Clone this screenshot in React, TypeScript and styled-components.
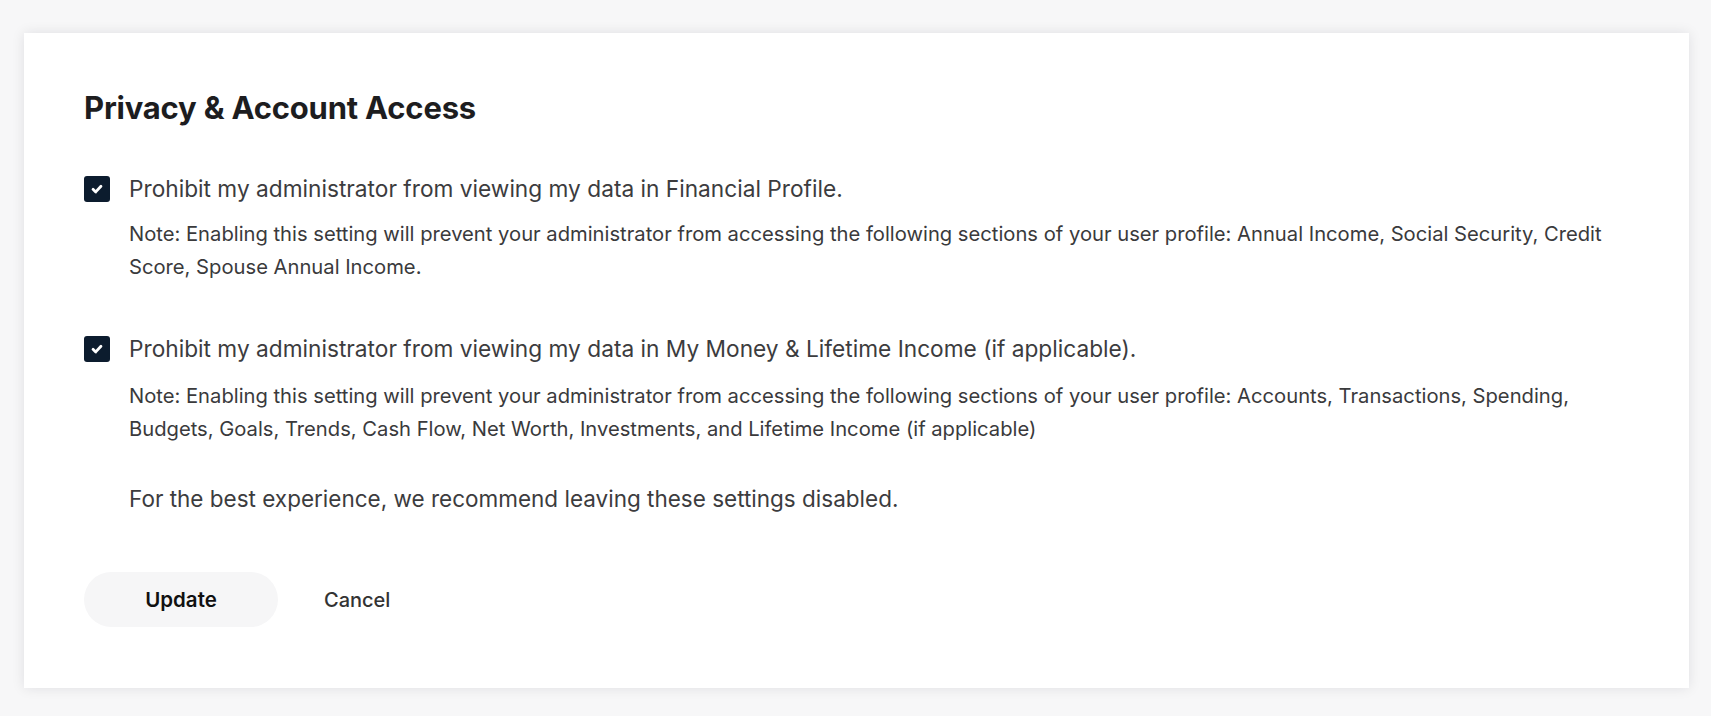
import React from "react";
import styled, { createGlobalStyle } from "styled-components";

const Global = createGlobalStyle`
  html, body { margin: 0; padding: 0; background: #f7f7f8; }
  body { font-family: Inter, "Liberation Sans", Arial, sans-serif; -webkit-font-smoothing: antialiased; }
`;

const Page = styled.div`
  padding: 33px 22px 27px 24px;
`;

const Card = styled.section`
  background: #ffffff;
  box-shadow: 0 0 12px rgba(20, 24, 40, 0.1);
  padding: 57px 60px 61px 60px;
  display: flex;
  flex-direction: column;
`;

const Title = styled.h1`
  margin: 0 0 48px 0;
  font-size: 31px;
  line-height: 36px;
  font-weight: 700;
  color: #1d1d1f;
  letter-spacing: -0.2px;
`;

const Option = styled.div<{ $gap: number }>`
  display: flex;
  flex-direction: column;
  margin-bottom: ${(p) => p.$gap}px;
`;

const Row = styled.label`
  display: flex;
  align-items: center;
  gap: 19px;
`;

const Box = styled.span`
  width: 26px;
  height: 26px;
  border-radius: 3px;
  background: #0c1c2e;
  display: inline-flex;
  align-items: center;
  justify-content: center;
  flex: none;
`;

const Label = styled.span`
  font-size: 22.7px;
  line-height: 30px;
  color: #3c3c3e;
  font-weight: 400;
`;

const Note = styled.p<{ $top: number }>`
  margin: ${(p) => p.$top}px 0 0 45px;
  font-size: 20.2px;
  line-height: 32.5px;
  color: #3a3a3c;
  max-width: 1500px;
`;

const Recommend = styled.p`
  margin: 0 0 58px 45px;
  font-size: 22.5px;
  line-height: 30px;
  color: #3c3c3e;
`;

const Actions = styled.div`
  display: flex;
  align-items: center;
  gap: 46px;
`;

const Button = styled.button<{ $primary?: boolean }>`
  font-family: inherit;
  border: none;
  cursor: pointer;
  height: 55px;
  font-size: ${(p) => (p.$primary ? "20.5px" : "20px")};
  font-weight: ${(p) => (p.$primary ? 600 : 500)};
  color: ${(p) => (p.$primary ? "#111" : "#333")};
  background: ${(p) => (p.$primary ? "#f6f6f7" : "transparent")};
  border-radius: 28px;
  width: ${(p) => (p.$primary ? "194px" : "auto")};
  padding: 0;
`;

const Check = () => (
  <svg width="14" height="14" viewBox="0 0 12 12" aria-hidden>
    <polyline
      points="2.6,6.3 4.9,8.5 9.4,3.6"
      fill="none"
      stroke="#fff"
      strokeWidth="2.4"
      strokeLinecap="round"
      strokeLinejoin="round"
    />
  </svg>
);

export default function App() {
  return (
    <>
      <Global />
      <Page>
        <Card>
          <Title>Privacy &amp; Account Access</Title>
          <Option $gap={51}>
            <Row>
              <Box>
                <Check />
              </Box>
              <Label>Prohibit my administrator from viewing my data in Financial Profile.</Label>
            </Row>
            <Note $top={14}>
              Note: Enabling this setting will prevent your administrator from accessing the following sections of your user profile: Annual Income, Social Security, Credit Score, Spouse Annual Income.
            </Note>
          </Option>
          <Option $gap={39}>
            <Row>
              <Box>
                <Check />
              </Box>
              <Label>
                Prohibit my administrator from viewing my data in My Money &amp; Lifetime Income (if applicable).
              </Label>
            </Row>
            <Note $top={16}>
              Note: Enabling this setting will prevent your administrator from accessing the following sections of your user profile: Accounts, Transactions, Spending, Budgets, Goals, Trends, Cash Flow, Net Worth, Investments, and Lifetime Income (if applicable)
            </Note>
          </Option>
          <Recommend>For the best experience, we recommend leaving these settings disabled.</Recommend>
          <Actions>
            <Button $primary>Update</Button>
            <Button>Cancel</Button>
          </Actions>
        </Card>
      </Page>
    </>
  );
}
